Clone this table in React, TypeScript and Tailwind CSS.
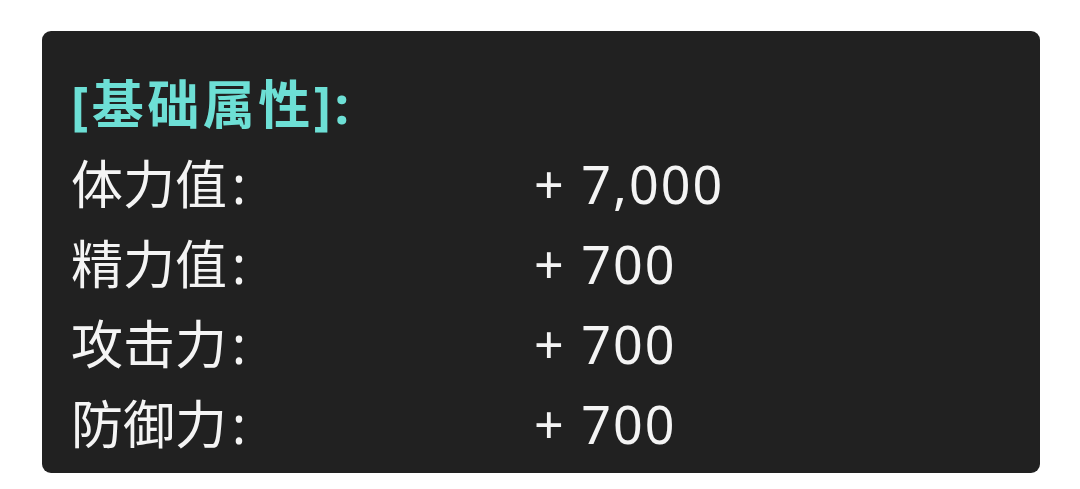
import React from "react";

const rows = [
  { label: "体力值", value: "+ 7,000" },
  { label: "精力值", value: "+ 700" },
  { label: "攻击力", value: "+ 700" },
  { label: "防御力", value: "+ 700" },
];

export default function App() {
  return (
    <div
      className="w-[1080px] h-[489px] bg-white pt-[31px] pl-[42px]"
      style={{ fontFamily: '"Noto Sans", "Noto Sans CJK SC", sans-serif' }}
    >
      <div className="w-[998px] h-[442px] rounded-[9px] bg-[#212121] pl-[29px] pt-[33px]">
        <div className="text-[52px] leading-[80px] font-bold tracking-[3.5px] text-[#6ddfd5]">[基础属性]:</div>
        {rows.map((r) => (
          <div key={r.label} className="flex text-[52px] leading-[80px] text-[#f4f4f4]">
            <div className="w-[463px]">
              {r.label}
              <span className="ml-[5px]">:</span>
            </div>
            <div className="tracking-[2px]">{r.value}</div>
          </div>
        ))}
      </div>
    </div>
  );
}
